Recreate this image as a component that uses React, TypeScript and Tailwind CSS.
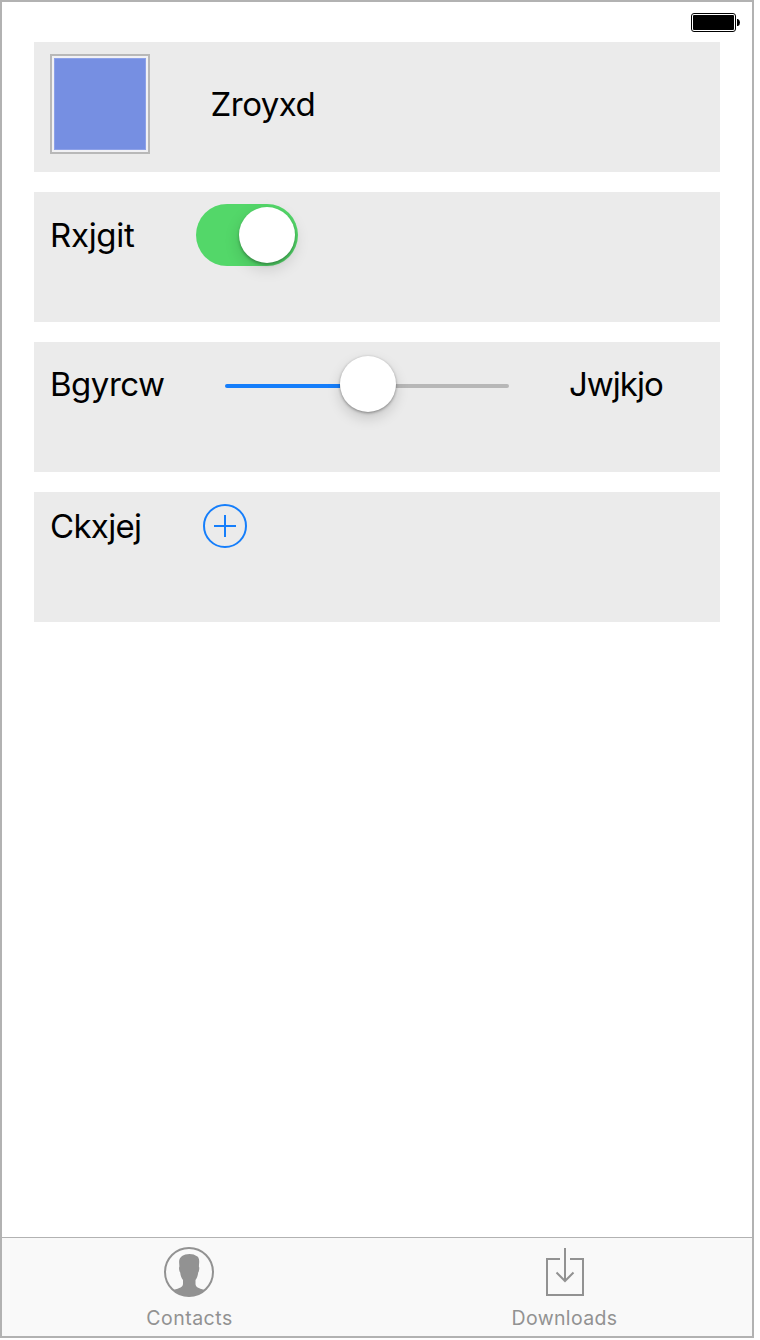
import type { ReactNode } from "react";

function Panel({ children }: { children: ReactNode }) {
  return <section className="flex h-[130px] items-start bg-[#ebebeb] px-4 pt-3">{children}</section>;
}

function BatteryIcon() {
  return (
    <svg className="h-[19px] w-[49px]" viewBox="0 0 49 19" aria-hidden="true">
      <rect x="0.5" y="0.5" width="44" height="18" rx="2.5" fill="none" stroke="#000" />
      <rect x="2" y="2" width="41" height="15" rx="1" fill="#000" />
      <path d="M46 6h1q2 1 2 3.5t-2 3.5h-1z" fill="#000" />
    </svg>
  );
}

function ContactsIcon() {
  return (
    <svg className="mr-[2px] h-[50px] w-[50px]" viewBox="0 0 50 50" aria-hidden="true">
      <circle cx="25" cy="25" r="24" fill="none" stroke="#929292" strokeWidth="2" />
      <path
        d="M25.500 7C29 7 31 8 32 8.800C34.500 9.500 35.300 12 35.200 15L34.900 19.500C35.600 20.500 35.300 24 34.200 25.500C33.800 28.500 33 31 31.500 33V37C31.700 40 34 41 40.500 43C36 47 31 49 25 49S14 47 9.500 43C16 41 18.800 40 19 37V33C17.500 31 16.500 28.500 16.200 25.500C15 24 14.700 20.500 15.400 19.500L15.100 15C15 10 19.500 7 25.500 7Z"
        fill="#929292"
      />
    </svg>
  );
}

function DownloadsIcon() {
  return (
    <svg className="h-[50px] w-[50px]" viewBox="0 0 50 50" fill="none" stroke="#929292" strokeWidth="2" aria-hidden="true">
      <path d="M20 12H7v36h36V12H30M25 1v33" />
      <path d="M16.500 25.500 25 34l8.500-8.500" />
    </svg>
  );
}

export default function App() {
  return (
    <div className="h-[1340px] w-[760px] bg-white font-['Inter','Liberation_Sans',sans-serif] text-black">
      <div className="flex h-[1338px] w-[754px] flex-col border-2 border-[#b2b2b2]">
        <header className="flex h-10 items-start justify-end pt-[11px] pr-3">
          <BatteryIcon />
        </header>
        <main className="flex flex-1 flex-col gap-5 pr-8 pl-8 text-[33px] leading-10 whitespace-nowrap">
          <Panel>
            <div className="h-[100px] w-[100px] border-2 border-[#b8b8b8] bg-[#f1f1f4] p-[2px]">
              <div className="h-full w-full border border-[#8da1e8] bg-[#768fe2]" />
            </div>
            <span className="mt-[30px] ml-[60.5px] tracking-[-0.5px]">Zroyxd</span>
          </Panel>
          <Panel>
            <span className="mt-[11px] w-[146px] tracking-[-0.3px]">Rxjgit</span>
            <button role="switch" aria-checked="true" aria-label="Rxjgit" className="flex h-[62px] w-[102px] items-center justify-end rounded-full bg-[#53d769] pr-[3px]">
              <span className="h-14 w-14 rounded-full bg-white shadow-[0_6px_16px_rgba(0,0,0,0.14),0_2px_3px_rgba(0,0,0,0.28)]" />
            </button>
          </Panel>
          <Panel>
            <span className="mt-[10px] w-[175px] tracking-[-0.5px]">Bgyrcw</span>
            <div className="mt-px flex h-[58px] w-[284px] items-center">
              <span className="mt-1 h-1 w-[115px] rounded-l-full bg-[#157efb]" />
              <span className="z-10 h-14 w-14 rounded-full bg-white shadow-[0_6px_14px_rgba(0,0,0,0.16),0_1px_3px_rgba(0,0,0,0.38)]" />
              <span className="mt-1 h-1 w-[113px] rounded-r-full bg-[#b7b7b7]" />
            </div>
            <span className="mt-[10px] ml-[60px] tracking-[-1px]">Jwjkjo</span>
          </Panel>
          <Panel>
            <span className="mt-[2px] w-[153px] tracking-[-0.7px]">Ckxjej</span>
            <button aria-label="Ckxjej">
              <svg className="block h-11 w-11" viewBox="0 0 44 44" fill="none" stroke="#157efb" strokeWidth="2" aria-hidden="true">
                <circle cx="22" cy="22" r="21" />
                <path d="M22 11v22M11 22h22" />
              </svg>
            </button>
          </Panel>
        </main>
        <nav className="grid h-[99px] grid-cols-2 border-t border-[#b2b2b2] bg-[#f9f9f9] text-[19.500px] leading-6 text-[#929292]">
          <div className="flex flex-col items-center pt-[9px]">
            <ContactsIcon />
            <span className="mt-[9px] tracking-[0.5px]">Contacts</span>
          </div>
          <div className="flex flex-col items-center pt-[9px]">
            <DownloadsIcon />
            <span className="mt-[9px] tracking-[0.35px]">Downloads</span>
          </div>
        </nav>
      </div>
    </div>
  );
}
